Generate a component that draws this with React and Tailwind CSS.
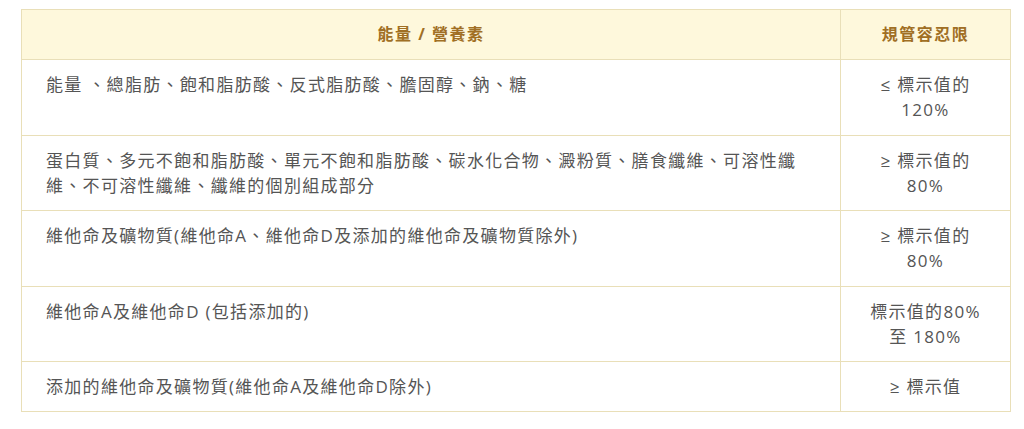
export default function App() {
  const rows = [
    {
      a: "能量 、總脂肪、飽和脂肪酸、反式脂肪酸、膽固醇、鈉、糖",
      b: ["≤ 標示值的", "120%"],
    },
    {
      a: "蛋白質、多元不飽和脂肪酸、單元不飽和脂肪酸、碳水化合物、澱粉質、膳食纖維、可溶性纖維、不可溶性纖維、纖維的個別組成部分",
      b: ["≥ 標示值的", "80%"],
    },
    {
      a: "維他命及礦物質(維他命A、維他命D及添加的維他命及礦物質除外)",
      b: ["≥ 標示值的", "80%"],
    },
    {
      a: "維他命A及維他命D (包括添加的)",
      b: ["標示值的80%", "至 180%"],
    },
    {
      a: "添加的維他命及礦物質(維他命A及維他命D除外)",
      b: ["≥ 標示值"],
    },
  ];
  return (
    <div
      className="w-[1024px] h-[429px] bg-white pt-[9px] pl-[21px]"
      style={{ fontFamily: '"Open Sans", "Noto Sans CJK TC", sans-serif' }}
    >
      <table className="w-[990px] border-collapse text-[17px] leading-[25.25px] tracking-[1.3px] text-[#555555]">
        <thead>
          <tr className="bg-[#fef8dc]">
            <th className="border border-[#e9dfb8] py-[12px] px-[24px] text-center font-bold text-[16px] leading-[25px] tracking-[1.5px] text-[#a06f24]">
              能量 / 營養素
            </th>
            <th className="w-[170px] border border-[#e9dfb8] py-[12px] px-[12px] text-center font-bold text-[16px] leading-[25px] tracking-[1.5px] text-[#a06f24]">
              規管容忍限
            </th>
          </tr>
        </thead>
        <tbody>
          {rows.map((r, i) => (
            <tr key={i}>
              <td className="border border-[#e9dfb8] py-[12px] pl-[24px] pr-[20px] align-top text-left">
                {r.a}
              </td>
              <td className="border border-[#e9dfb8] py-[12px] px-[8px] align-top text-center">
                {r.b.map((t, j) => (
                  <div key={j}>{t}</div>
                ))}
              </td>
            </tr>
          ))}
        </tbody>
      </table>
    </div>
  );
}
